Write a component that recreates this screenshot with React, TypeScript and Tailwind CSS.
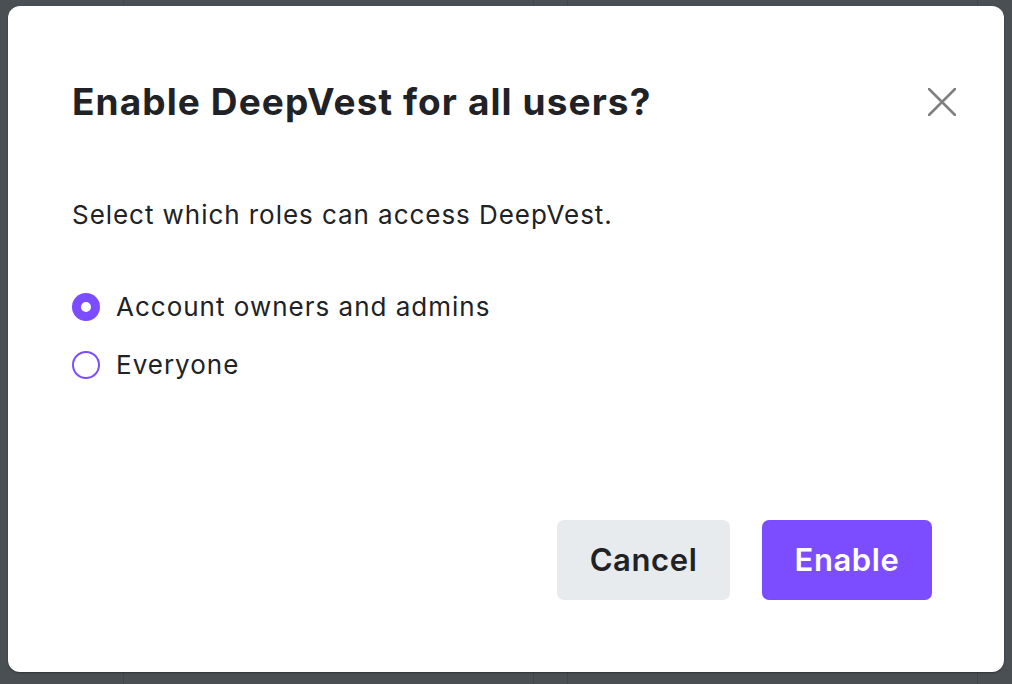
import React from "react";

export default function App() {
  return (
    <div
      className="relative w-[1012px] h-[684px] overflow-hidden bg-[#4a4f53]"
      style={{ fontFamily: "Inter, 'Noto Sans', sans-serif" }}
    >
      {/* background content lines */}
      <div className="absolute top-0 bottom-0 left-[123px] w-px bg-[#42464a]" />
      <div className="absolute top-0 bottom-0 left-[533px] w-px bg-[#42464a]" />
      <div className="absolute top-0 bottom-0 left-[567px] w-px bg-[#42464a]" />
      <div className="absolute top-0 bottom-0 left-[977px] w-px bg-[#42464a]" />

      <div className="relative pl-[8px] pt-[6px]">
        <div className="flex h-[666px] w-[996px] flex-col rounded-[12px] bg-white pl-[64px] pr-[48px] pt-[76px] pb-[72px] shadow-[0_1px_2px_rgba(0,0,0,0.35)]">
          <div className="flex h-[40px] items-center justify-between">
            <h1 className="text-[37px] font-bold leading-[40px] tracking-[1.1px] text-[#202226]">
              Enable DeepVest for all users?
            </h1>
            <button className="flex h-[28px] w-[28px] items-center justify-center">
              <svg width="28" height="28" viewBox="0 0 28 28" fill="none">
                <path
                  d="M1 1L27 27M27 1L1 27"
                  stroke="#808080"
                  strokeWidth="2.6"
                  strokeLinecap="round"
                />
              </svg>
            </button>
          </div>

          <p className="mt-[77px] text-[26px] leading-[32px] tracking-[0.95px] text-[#202226]">
            Select which roles can access DeepVest.
          </p>

          <div className="mt-[60px] flex flex-col gap-[26px]">
            <label className="flex h-[32px] items-center gap-[16px]">
              <span className="flex h-[28px] w-[28px] items-center justify-center rounded-full bg-[#7c4dff]">
                <span className="h-[10px] w-[10px] rounded-full bg-white" />
              </span>
              <span className="text-[26px] leading-[32px] tracking-[1px] text-[#202226]">
                Account owners and admins
              </span>
            </label>
            <label className="flex h-[32px] items-center gap-[16px]">
              <span className="h-[28px] w-[28px] rounded-full border-2 border-[#7c4dff] bg-white" />
              <span className="text-[26px] leading-[32px] tracking-[1px] text-[#202226]">
                Everyone
              </span>
            </label>
          </div>

          <div className="mt-auto flex justify-end gap-[32px] pr-[24px]">
            <button className="flex h-[80px] w-[173px] items-center justify-center rounded-[7px] bg-[#e8ebee] text-[31px] font-semibold tracking-[0.6px] text-[#202226]">
              Cancel
            </button>
            <button className="flex h-[80px] w-[170px] items-center justify-center rounded-[7px] bg-[#7c4dff] text-[31px] font-semibold tracking-[0.6px] text-white">
              Enable
            </button>
          </div>
        </div>
      </div>
    </div>
  );
}
